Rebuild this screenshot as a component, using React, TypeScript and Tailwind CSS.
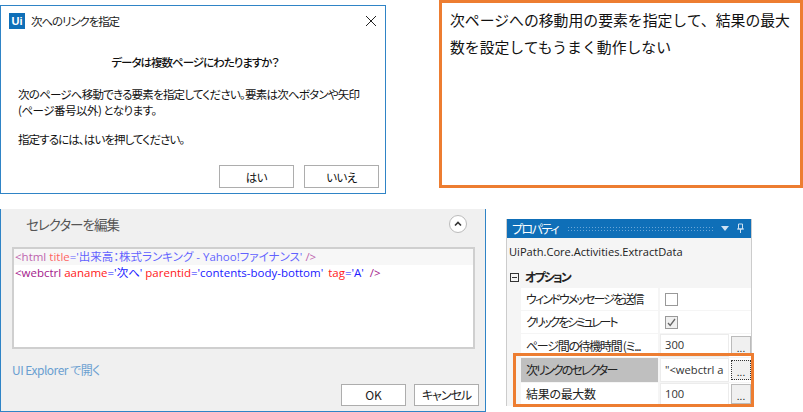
const jp = "font-['Noto_Sans_CJK_JP','Noto_Sans',sans-serif] [font-feature-settings:'palt']";

function ConfirmDialog() {
  return (
    <div className="flex h-[189px] w-[386px] flex-col border border-[#2f84c6] bg-white text-[11.5px] leading-[16px] text-[#111]">
      <div className="flex h-[30px] items-center pl-[8px] pr-[8px]">
        <span className="flex h-[16px] w-[16px] items-center justify-center bg-[#0f6fb8] font-['Liberation_Sans',sans-serif] text-[11px] font-bold text-white">Ui</span>
        <span className="ml-[6px] tracking-[-1.1px] text-[#222]">次へのリンクを指定</span>
        <svg className="ml-auto" width="12" height="12" viewBox="0 0 12 12" fill="none" stroke="#222" strokeWidth="1">
          <path d="M1 1l10 10M11 1L1 11" />
        </svg>
      </div>
      <p className="mt-[18px] pl-[4px] text-center font-medium tracking-[-1px]">データは複数ページにわたりますか？</p>
      <p className="mt-[16px] whitespace-nowrap px-[17px] tracking-[-0.77px]">
        次のページへ移動できる要素を指定してください。要素は次へボタンや矢印
        <br />
        <span className="tracking-[-0.5px]">(ページ番号以外) となります。</span>
      </p>
      <p className="mt-[13px] px-[17px] tracking-[-0.9px]">指定するには、はいを押してください。</p>
      <div className="mt-auto flex justify-end gap-[10px] pb-[5px] pr-[6px]">
        <button className="h-[23px] w-[75px] border border-[#adadad] bg-white tracking-[-0.5px]">はい</button>
        <button className="h-[23px] w-[75px] border border-[#adadad] bg-white tracking-[-0.5px]">いいえ</button>
      </div>
    </div>
  );
}

function NoteBox() {
  return (
    <div className="h-[188px] w-[364px] border-[3px] border-[#ed7d31] bg-white px-[8px] py-[3px] font-['Noto_Sans_CJK_JP',sans-serif] text-[14.85px] leading-[27px] text-[#111] [font-feature-settings:normal]">
      次ページへの移動用の要素を指定して、結果の最大数を設定してもうまく動作しない
    </div>
  );
}

function SelectorEditor() {
  return (
    <div className="flex h-[203px] w-[486px] flex-col border-x border-b border-[#2f84c6] bg-[#f0f0f0] pl-[11px] pr-[10px]">
      <div className="flex h-[37px] items-center justify-between pb-[7px]">
        <span className="pl-[14px] text-[13.5px] tracking-[-1px] text-[#555]">セレクターを編集</span>
        <span className="mr-[8px] flex h-[18px] w-[18px] items-center justify-center rounded-full border border-[#bbb] bg-white">
          <svg width="8" height="6" viewBox="0 0 8 6" fill="none" stroke="#333" strokeWidth="1.6">
            <path d="M1 4.5l3-3 3 3" />
          </svg>
        </span>
      </div>
      <div className="mt-[1px] h-[102px] border-2 border-[#cfcfcf] bg-white font-['Open_Sans','Noto_Sans_CJK_JP',sans-serif] text-[11.5px] leading-[16px]">
        <div className="flex h-[16px] items-center bg-[#f4f4f4] pl-[1px] opacity-70">
          <span className="text-[#a31a8c]">&lt;html</span>
          <span className="ml-[3px] text-[#ff2020]">title</span>
          <span className="text-[#2020ff]">='出来高：株式ランキング - Yahoo!ファイナンス'</span>
          <span className="ml-[3px] text-[#a31a8c]">/&gt;</span>
        </div>
        <div className="flex h-[16px] items-center pl-[1px]">
          <span className="text-[#a31a8c]">&lt;webctrl</span>
          <span className="ml-[3px] text-[#ff2020]">aaname</span>
          <span className="text-[#2020ff]">='次へ'</span>
          <span className="ml-[3px] text-[#ff2020]">parentid</span>
          <span className="text-[#2020ff]">='contents-body-bottom'</span>
          <span className="ml-[5px] text-[#ff2020]">tag</span>
          <span className="text-[#2020ff]">='A'</span>
          <span className="ml-[6px] text-[#a31a8c]">/&gt;</span>
        </div>
      </div>
      <a className="mt-[13px] text-[12px] leading-[16px] tracking-[-0.5px] text-[#6a9fd0]">UI Explorer で開く</a>
      <div className="-mr-[4px] mt-auto flex justify-end gap-[8px] pb-[5px]">
        <button className="h-[22px] w-[65px] border border-[#adadad] bg-white text-[12px] text-[#222]">OK</button>
        <button className="h-[22px] w-[65px] border border-[#adadad] bg-white text-[12px] tracking-[-1px] text-[#222]">キャンセル</button>
      </div>
    </div>
  );
}

function PropRow({ label, children, selected, rowClass, labelClass }: { label: string; children: React.ReactNode; selected?: boolean; rowClass: string; labelClass: string }) {
  return (
    <div className={`flex items-stretch gap-[2px] ${rowClass}`}>
      <div className={`flex w-[137px] items-center whitespace-nowrap pl-[5px] text-[12px] text-[#222] ${labelClass} ${selected ? "bg-[#bfbfbf]" : "bg-white"}`}>{label}</div>
      <div className="flex flex-1 items-center bg-white">{children}</div>
    </div>
  );
}

function ValueCell({ value, focused }: { value: string; focused?: boolean }) {
  return (
    <>
      <span className="flex h-full w-[69px] items-center overflow-hidden whitespace-nowrap border border-[#ececec] pl-[4px] font-['Open_Sans',sans-serif] text-[11.2px] text-[#333]">{value}</span>
      <span className={`ml-[2px] flex h-[20px] w-[20px] items-end justify-center border bg-[#f0f0f0] text-[10px] leading-[14px] text-[#222] ${focused ? "border-dotted border-[#333]" : "border-[#bbb]"}`}>...</span>
    </>
  );
}

function PropertyPanel() {
  return (
    <div className="relative flex h-[187px] w-[246px] flex-col border-x border-[#ccc] bg-[#f5f5f5]">
      <div className="flex h-[19px] items-center bg-[#0f6fb8] pl-[5px] pr-[6px] text-[12px] text-white">
        <span className="tracking-[-1.5px]">プロパティ</span>
        <span className="ml-[9px] mr-[8px] h-[5px] flex-1 bg-[radial-gradient(#6aa6d8_1px,transparent_1px)] bg-[length:3px_3px]" />
        <svg width="8" height="5" viewBox="0 0 8 5" fill="#cfe2f3"><path d="M0 0h8L4 5z" /></svg>
        <svg className="ml-[7px]" width="9" height="11" viewBox="0 0 9 11" fill="none" stroke="#cfe2f3"><path d="M2.5 1h4v5h-4zM1 6h7M4.5 6v4" /></svg>
      </div>
      <div className="flex h-[28px] items-center pl-[2px] font-['Open_Sans',sans-serif] text-[11.1px] text-[#222]">UiPath.Core.Activities.ExtractData</div>
      <div className="flex h-[22px] items-center pl-[3px] text-[12px] font-semibold tracking-[-1.9px] text-[#222]">
        <span className="mr-[6px] flex h-[9px] w-[9px] items-center justify-center border border-[#333]">
          <span className="h-px w-[5px] bg-[#333]" />
        </span>
        オプション
      </div>
      <div className="ml-[14px] flex flex-col gap-[1px]">
        <PropRow label="ウィンドウメッセージを送信" rowClass="h-[22px]" labelClass="tracking-[-1.85px]">
          <span className="ml-[5px] h-[13px] w-[13px] border border-[#999] bg-white" />
        </PropRow>
        <PropRow label="クリックをシミュレート" rowClass="h-[22px]" labelClass="tracking-[-2.2px]">
          <span className="ml-[5px] flex h-[13px] w-[13px] items-center justify-center border border-[#999] bg-[#f0f0f0]">
            <svg width="9" height="9" viewBox="0 0 9 9" fill="none" stroke="#666" strokeWidth="1.3"><path d="M1 5l2.2 2.5L8 1" /></svg>
          </span>
        </PropRow>
        <PropRow label="ページ間の待機時間 (ミ..." rowClass="h-[23px]" labelClass="tracking-[-1.3px]">
          <ValueCell value="300" />
        </PropRow>
        <PropRow label="次リンクのセレクター" selected rowClass="h-[24px]" labelClass="tracking-[-1.9px]">
          <ValueCell value={'"<webctrl a'} focused />
        </PropRow>
        <PropRow label="結果の最大数" rowClass="h-[22px]" labelClass="tracking-[-0.3px]">
          <ValueCell value="100" />
        </PropRow>
      </div>
      <div className="absolute left-[6px] top-[134px] h-[54px] w-[241px] border-[3px] border-[#ed7d31]" />
    </div>
  );
}

export default function App() {
  return (
    <div className={`flex h-[412px] w-[803px] flex-col overflow-hidden bg-white ${jp}`}>
      <div className="flex h-[209px] items-start justify-between">
        <div className="pt-[5px]">
          <ConfirmDialog />
        </div>
        <NoteBox />
      </div>
      <div className="flex items-start">
        <SelectorEditor />
        <div className="ml-[20px] pt-[10px]">
          <PropertyPanel />
        </div>
      </div>
    </div>
  );
}
